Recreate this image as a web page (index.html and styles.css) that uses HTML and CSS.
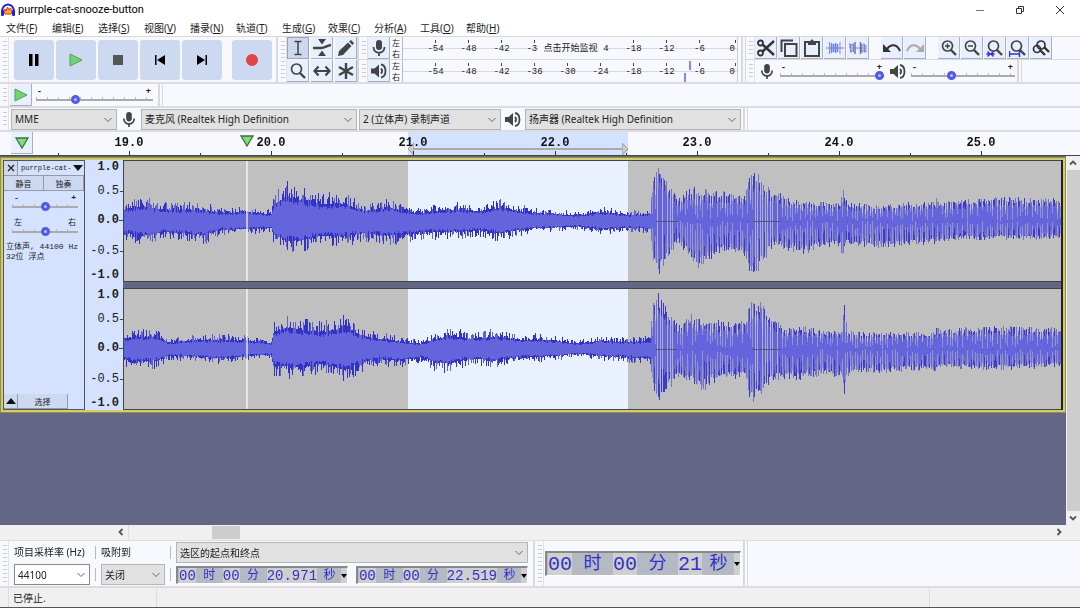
FILE: index.html
```
<!DOCTYPE html>
<html lang="zh-CN">
<head>
    <meta charset="UTF-8">
    <meta name="viewport" content="width=device-width, initial-scale=1.0">
    <title>purrple-cat-snooze-button</title>
    <link rel="stylesheet" href="styles.css">
</head>
<body>
    <svg class="sprite" aria-hidden="true">
        <symbol id="mic" viewBox="0 0 16 18">
            <rect x="5" y="1" width="6" height="10" rx="3" fill="#444"/>
            <path d="M2.5 8c0 7.500 11 7.500 11 0M8 13.500v3.500" fill="none" stroke="#444" stroke-width="1.800"/>
        </symbol>
        <symbol id="speaker" viewBox="0 0 18 16">
            <path d="M1 5.500h3.500L9 1.500v13L4.500 10.500H1z" fill="#444"/>
            <path d="M11 5.500c1.500 1.500 1.500 3.500 0 5M11 1.500c6 1 6 12 0 13" fill="none" stroke="#444" stroke-width="1.800"/>
        </symbol>
        <symbol id="play" viewBox="0 0 14 14">
            <path d="M1 1L13 7L1 13z" fill="#6ed66e" stroke="#5a9a5a"/>
        </symbol>
        <symbol id="marker" viewBox="0 0 14 12">
            <path d="M1 1H13L7 11z" fill="#7be07b" stroke="#3f6f3f" stroke-width="1.300"/>
        </symbol>
        <symbol id="chevron" viewBox="0 0 10 6">
            <path d="M1.500 1L5 4.500L8.500 1" fill="none" stroke="#666"/>
        </symbol>
        <symbol id="arrow" viewBox="0 0 8 8">
            <path d="M1 5.500L4 2.500L7 5.500" fill="none" stroke="#555" stroke-width="1.800"/>
        </symbol>
        <symbol id="lens" viewBox="0 0 18 18">
            <circle cx="7.500" cy="7" r="5" fill="none" stroke="#444" stroke-width="1.700"/>
            <path d="M11 11l5 5" stroke="#444" stroke-width="2.400"/>
        </symbol>
    </svg>

    <header class="titlebar">
        <svg class="logo" viewBox="0 0 16 14">
            <path d="M2 10C1 -1.500 15 -1.500 14 10" fill="none" stroke="#2222dd" stroke-width="2"/>
            <path d="M4 9l1-3 1 2 1.500-4 1.500 3 1.500-2L12 9l-1 2H5z" fill="#ffb020" stroke="#e03020"/>
            <rect x="1" y="7" width="3" height="6" rx="1" fill="#2222dd"/>
            <rect x="12" y="7" width="3" height="6" rx="1" fill="#2222dd"/>
        </svg>
        <h1>purrple-cat-snooze-button</h1>
        <button aria-label="最小化"><svg viewBox="0 0 10 10"><path d="M1 5.500h8" stroke="#777"/></svg></button>
        <button aria-label="还原"><svg viewBox="0 0 10 10"><path d="M1.500 3.500h5v5h-5zM3.500 3V1.500h5v5H7" fill="none" stroke="#333"/></svg></button>
        <button aria-label="关闭"><svg viewBox="0 0 10 10"><path d="M1 1l8 8M9 1l-8 8" stroke="#333"/></svg></button>
    </header>

    <nav class="menubar">
        <a href="#">文件(<u>F</u>)</a>
        <a href="#">编辑(<u>E</u>)</a>
        <a href="#">选择(<u>S</u>)</a>
        <a href="#">视图(<u>V</u>)</a>
        <a href="#">播录(<u>N</u>)</a>
        <a href="#">轨道(<u>T</u>)</a>
        <a href="#">生成(<u>G</u>)</a>
        <a href="#">效果(<u>C</u>)</a>
        <a href="#">分析(<u>A</u>)</a>
        <a href="#">工具(<u>O</u>)</a>
        <a href="#">帮助(<u>H</u>)</a>
    </nav>

    <div class="dock dock-main">
        <div class="toolbar">
            <div class="grip"></div>
            <div class="transport">
                <button aria-label="暂停"><svg viewBox="0 0 14 14"><path d="M2 1h3.500v12H2zM8 1h3.500v12H8z"/></svg></button>
                <button aria-label="播放"><svg><use href="#play"/></svg></button>
                <button aria-label="停止"><svg viewBox="0 0 14 14"><path d="M2 2h10v10H2z" fill="#555"/></svg></button>
                <button aria-label="跳至开头"><svg viewBox="0 0 14 14"><path d="M2 2h1.500v10H2zM12 2v10L4 7z"/></svg></button>
                <button aria-label="跳至结尾"><svg viewBox="0 0 14 14"><path d="M10.500 2H12v10h-1.500zM2 2v10l8-5z"/></svg></button>
                <button class="record" aria-label="录制"><svg viewBox="0 0 14 14"><circle cx="7" cy="7" r="6" fill="#e04646"/></svg></button>
            </div>
        </div>
        <div class="toolbar">
            <div class="grip"></div>
            <div class="tools">
                <button class="active" aria-label="选择工具"><svg viewBox="0 0 18 18"><path d="M5.500 2.500h2.500l1 .5 1-.5h2.500M5.500 15.500h2.500l1-.5 1 .5h2.500M9 3v12" fill="none" stroke="#444" stroke-width="1.500"/></svg></button>
                <button aria-label="包络工具"><svg viewBox="0 0 18 18"><path d="M5 0h8L9 5.500zM5 17h8L9 11.500z" fill="#444"/><path d="M0 9h8C12 9 13 7 18 6" fill="none" stroke="#444" stroke-width="2.400"/></svg></button>
                <button aria-label="绘制工具"><svg viewBox="0 0 18 18"><path d="M1 17l1-5L11 3.500l3.500 3.500L6 16zM12 2.500l2-1.500L17 4l-1.500 2z" fill="#444"/></svg></button>
                <button aria-label="缩放工具"><svg><use href="#lens"/></svg></button>
                <button aria-label="时移工具"><svg viewBox="0 0 18 18"><path d="M2 9h14M5.500 4.500L1.500 9l4 4.500M12.500 4.500l4 4.500-4 4.500" fill="none" stroke="#444" stroke-width="2.200"/></svg></button>
                <button aria-label="多功能工具"><svg viewBox="0 0 18 18"><path d="M9 1v16M2 5l14 8M16 5L2 13" stroke="#444" stroke-width="2.400"/></svg></button>
            </div>
        </div>
        <div class="toolbar meters">
            <div class="meter-row">
                <div class="grip"></div>
                <button class="tool" aria-label="录音电平"><svg><use href="#mic"/></svg></button>
                <div class="channels"><span>左</span><span>右</span></div>
                <div class="meter">
                    <span>-54</span><span>-48</span><span>-42</span><span>-36</span><span>-30</span><span>-24</span><span>-18</span><span>-12</span><span>-6</span><span>0</span>
                    <button class="monitor">点击开始监视</button>
                </div>
            </div>
            <div class="meter-row">
                <div class="grip"></div>
                <button class="tool" aria-label="播放电平"><svg><use href="#speaker"/></svg></button>
                <div class="channels"><span>左</span><span>右</span></div>
                <div class="meter">
                    <span>-54</span><span>-48</span><span>-42</span><span>-36</span><span>-30</span><span>-24</span><span>-18</span><span>-12</span><span>-6</span><span>0</span>
                    <i class="peak peak-left"></i>
                    <i class="peak peak-right"></i>
                </div>
            </div>
        </div>
        <div class="edit-mixer">
            <div class="edit-row">
                <div class="grip"></div>
                <div class="button-group">
                    <button class="tool" aria-label="剪切"><svg viewBox="0 0 18 18"><circle cx="3.500" cy="4" r="2.500" fill="none" stroke="#333" stroke-width="1.800"/><circle cx="3.500" cy="14" r="2.500" fill="none" stroke="#333" stroke-width="1.800"/><path d="M5.500 5.500L17 16M5.500 12.500L17 2" stroke="#333" stroke-width="2.400"/></svg></button>
                    <button class="tool" aria-label="复制"><svg viewBox="0 0 18 18"><path d="M1.500 13V1.500H13M5 5h11.500v12H5z" fill="none" stroke="#444" stroke-width="2"/></svg></button>
                    <button class="tool" aria-label="粘贴"><svg viewBox="0 0 18 18"><path d="M2 3h14v14H2z" fill="none" stroke="#444" stroke-width="2"/><path d="M5 2h2.500c0-2 3-2 3 0H13v4H5z" fill="#444"/></svg></button>
                    <button class="tool" aria-label="修剪音频"><svg viewBox="0 0 18 18"><path d="M0 9h18" stroke="#6f7fe8"/><path d="M5.500 4v10M7.500 5v8M9.500 4v10M11.500 5v8" stroke="#6f7fe8" stroke-width="1.500"/><path d="M3.500 3v12M14 3v12" stroke="#8090b0"/></svg></button>
                    <button class="tool" aria-label="静音音频"><svg viewBox="0 0 18 18"><path d="M0 9V5h1.500v8H3V5h1.500v8M12.500 5v8H14V5h1.500v8H17V6" fill="none" stroke="#6f7fe8"/><path d="M6 9h6" stroke="#6f7fe8"/><path d="M6 3v12M11.500 3v12" stroke="#777" stroke-width="1.500"/></svg></button>
                </div>
                <div class="button-group">
                    <button class="tool" aria-label="撤销"><svg viewBox="0 0 18 18"><path d="M4 10C8 4.500 14 5 17 12" fill="none" stroke="#333" stroke-width="2"/><path d="M0 5v8h8z" fill="#333"/></svg></button>
                    <button class="tool" aria-label="重做"><svg viewBox="0 0 18 18"><path d="M14 10C10 4.500 4 5 1 12" fill="none" stroke="#aaa" stroke-width="2"/><path d="M18 5v8h-8z" fill="#aaa"/></svg></button>
                </div>
                <div class="button-group">
                    <button class="tool" aria-label="放大"><svg viewBox="0 0 18 18"><use href="#lens"/><path d="M5 7h5M7.500 4.500v5" stroke="#444" stroke-width="1.500"/></svg></button>
                    <button class="tool" aria-label="缩小"><svg viewBox="0 0 18 18"><use href="#lens"/><path d="M5 7h5" stroke="#444" stroke-width="1.500"/></svg></button>
                    <button class="tool" aria-label="适应选区"><svg viewBox="0 0 18 18"><use href="#lens"/><path d="M0 15h9M7 12.500L4.500 15 7 17.500zM2 12.500L4.500 15 2 17.500z" fill="#3333dd" stroke="#3333dd"/></svg></button>
                    <button class="tool" aria-label="适应项目"><svg viewBox="0 0 18 18"><use href="#lens"/><path d="M.5 12v6M10.500 12v6M1 15h9" stroke="#3333dd" stroke-width="1.500"/></svg></button>
                    <button class="tool" aria-label="缩放切换"><svg viewBox="0 0 18 18"><circle cx="9" cy="6" r="4" fill="none" stroke="#333" stroke-width="1.700"/><circle cx="5" cy="10" r="3.500" fill="none" stroke="#333" stroke-width="1.700"/><path d="M12 8l5 5M8 11l5 5" stroke="#333" stroke-width="2.400"/></svg></button>
                </div>
            </div>
            <div class="mixer-row">
                <div class="toolbar">
                    <div class="grip"></div>
                    <svg class="device-icon"><use href="#mic"/></svg>
                    <div class="slider">
                        <div class="ends"><span>-</span><span>+</span></div>
                        <input type="range" min="0" max="100" value="100" aria-label="录音音量">
                    </div>
                    <svg class="device-icon"><use href="#speaker"/></svg>
                    <div class="slider">
                        <div class="ends"><span>-</span><span>+</span></div>
                        <input type="range" min="0" max="100" value="38" aria-label="播放音量">
                    </div>
                </div>
                <div class="dock-end"></div>
            </div>
        </div>
    </div>

    <div class="dock">
        <div class="toolbar speed">
            <div class="grip"></div>
            <button class="tool" aria-label="以指定速度播放"><svg><use href="#play"/></svg></button>
            <div class="slider">
                <div class="ends"><span>-</span><span>+</span></div>
                <input type="range" min="0" max="100" value="32" aria-label="播放速度">
            </div>
        </div>
        <div class="dock-end"></div>
    </div>

    <div class="dock">
        <div class="toolbar devices">
            <div class="grip"></div>
            <div class="combo host">
                <select aria-label="音频主机"><option>MME</option></select>
                <svg><use href="#chevron"/></svg>
            </div>
            <svg class="device-icon"><use href="#mic"/></svg>
            <div class="combo input-device">
                <select aria-label="录制设备"><option>麦克风 (Realtek High Definition</option></select>
                <svg><use href="#chevron"/></svg>
            </div>
            <div class="combo input-channels">
                <select aria-label="录制声道"><option>2 (立体声) 录制声道</option></select>
                <svg><use href="#chevron"/></svg>
            </div>
            <svg class="device-icon"><use href="#speaker"/></svg>
            <div class="combo output-device">
                <select aria-label="播放设备"><option>扬声器 (Realtek High Definition</option></select>
                <svg><use href="#chevron"/></svg>
            </div>
        </div>
        <div class="dock-end"></div>
    </div>

    <div class="timeline">
        <div class="selection-range">
            <svg viewBox="0 0 6 12"><path d="M6 0v12L0 6z" fill="#ccc" stroke="#999"/></svg>
            <svg viewBox="0 0 6 12"><path d="M0 0v12l6-6z" fill="#ccc" stroke="#999"/></svg>
        </div>
        <button class="tool pin" aria-label="固定播放头"><svg><use href="#marker"/></svg></button>
        <div class="scale">
            <span>19.0</span><span>20.0</span><span>21.0</span><span>22.0</span><span>23.0</span><span>24.0</span><span>25.0</span>
        </div>
        <svg class="playhead"><use href="#marker"/></svg>
    </div>

    <main class="workspace">
        <div class="tracks">
            <section class="track">
                <aside class="track-panel">
                    <div class="track-title">
                        <button aria-label="关闭轨道"><svg viewBox="0 0 8 8"><path d="M1 1l6 6M7 1L1 7" stroke="#222" stroke-width="1.300"/></svg></button>
                        <button class="track-name"><span>purrple-cat-</span><svg viewBox="0 0 10 6"><path d="M0 0h10L5 6z" fill="#111"/></svg></button>
                    </div>
                    <div class="track-mutes">
                        <button>静音</button>
                        <button>独奏</button>
                    </div>
                    <div class="slider">
                        <div class="ends"><span>-</span><span>+</span></div>
                        <input type="range" min="0" max="100" value="50" aria-label="增益">
                    </div>
                    <div class="slider pan">
                        <div class="ends"><span>左</span><span>右</span></div>
                        <input type="range" min="0" max="100" value="50" aria-label="声像">
                    </div>
                    <p>立体声, 44100 Hz<br>32位 浮点</p>
                    <div class="track-foot">
                        <button aria-label="折叠"><svg viewBox="0 0 10 6"><path d="M0 6h10L5 0z" fill="#111"/></svg></button>
                        <button class="track-select">选择</button>
                    </div>
                </aside>
                <div class="channel-list">
                    <div class="channel">
                        <div class="amplitude"><b>1.0</b><span>0.5</span><b>0.0</b><span>-0.5</span><b>-1.0</b></div>
                        <div class="wave"><canvas id="wave-left"></canvas></div>
                    </div>
                    <div class="channel">
                        <div class="amplitude"><b>1.0</b><span>0.5</span><b>0.0</b><span>-0.5</span><b>-1.0</b></div>
                        <div class="wave"><canvas id="wave-right"></canvas></div>
                    </div>
                </div>
            </section>
        </div>
        <div class="vscroll">
            <button aria-label="向上"><svg><use href="#arrow"/></svg></button>
            <div class="thumb"></div>
            <button class="down" aria-label="向下"><svg><use href="#arrow"/></svg></button>
        </div>
    </main>
    <div class="hscroll">
        <button class="left" aria-label="向左"><svg><use href="#arrow"/></svg></button>
        <div class="rail"><div class="thumb"></div></div>
        <button class="right" aria-label="向右"><svg><use href="#arrow"/></svg></button>
    </div>

    <div class="dock dock-bottom">
        <div class="toolbar">
            <div class="grip"></div>
            <div class="field rate">
                <label for="rate">项目采样率 (Hz)</label>
                <div class="combo white">
                    <select id="rate"><option>44100</option></select>
                    <svg><use href="#chevron"/></svg>
                </div>
            </div>
            <div class="field snap">
                <label for="snap">吸附到</label>
                <div class="combo">
                    <select id="snap"><option>关闭</option></select>
                    <svg><use href="#chevron"/></svg>
                </div>
            </div>
            <div class="field range">
                <div class="combo">
                    <select aria-label="选区显示"><option>选区的起点和终点</option></select>
                    <svg><use href="#chevron"/></svg>
                </div>
                <div class="times">
                    <div class="time"><b>00</b><i>时</i><b>00</b><i>分</i><b>20.971</b><i>秒</i><button aria-label="格式"><svg viewBox="0 0 6 4"><path d="M0 0h6L3 4z"/></svg></button></div>
                    <div class="time"><b>00</b><i>时</i><b>00</b><i>分</i><b>22.519</b><i>秒</i><button aria-label="格式"><svg viewBox="0 0 6 4"><path d="M0 0h6L3 4z"/></svg></button></div>
                </div>
            </div>
        </div>
        <div class="toolbar position">
            <div class="grip"></div>
            <div class="time big"><b>00</b><i>时</i><b>00</b><i>分</i><b>21</b><i>秒</i><button aria-label="格式"><svg viewBox="0 0 6 4"><path d="M0 0h6L3 4z"/></svg></button></div>
        </div>
        <div class="dock-end"></div>
    </div>

    <footer class="statusbar">
        <span class="state">已停止.</span>
        <span class="message"></span>
        <span class="actual-rate"></span>
    </footer>
    <script src="wave.js"></script>
</body>
</html>
```
FILE: styles.css
```
* {
    box-sizing: border-box;
}
body {
    margin: 0;
    height: 100vh;
    display: flex;
    flex-direction: column;
    overflow: hidden;
    background-color: #f8f9ff;
    border-bottom: 1px solid #555;
    color: #222;
    font-family: "Noto Sans", "Noto Sans CJK SC", sans-serif;
    font-size: 10px;
}
button {
    display: flex;
    align-items: center;
    justify-content: center;
    padding: 0;
    border: none;
    background: none;
    color: inherit;
    font: inherit;
}
svg {
    display: block;
    flex: none;
}
.sprite {
    position: absolute;
    width: 0;
    height: 0;
}

/* title and menu */
.titlebar {
    display: flex;
    align-items: center;
    height: 19px;
    flex: none;
    background-color: #fff;
}
.logo {
    width: 16px;
    height: 14px;
    margin-right: 2px;
}
.titlebar h1 {
    flex: 1;
    margin: 0;
    font-family: Roboto, "Noto Sans", sans-serif;
    font-size: 11px;
    font-weight: normal;
    color: #000;
}
.titlebar button {
    width: 40px;
    height: 19px;
}
.titlebar button svg {
    width: 10px;
    height: 10px;
}
.menubar {
    display: flex;
    gap: 12px;
    height: 18px;
    flex: none;
    padding-left: 6px;
    line-height: 18px;
    background-color: #fff;
    border-bottom: 1px solid #d9d9d9;
}
.menubar a {
    width: 34px;
    color: #222;
    text-decoration: none;
    white-space: nowrap;
}

/* toolbars */
.dock {
    display: flex;
    height: 24px;
    flex: none;
    border-bottom: 2px solid #dcdce0;
}
.dock-main {
    height: 47px;
}
.toolbar {
    display: flex;
    align-items: center;
    border-right: 2px solid #d9d9dc;
}
.dock-end {
    width: 3px;
    border-right: 1px solid #d9d9dc;
}
.grip {
    width: 9px;
    align-self: stretch;
    flex: none;
    border-right: 1px solid #e2e2e6;
    background: repeating-linear-gradient(#ccccd0 0 1px, transparent 1px 4px) 3px 4px / 4px calc(100% - 8px) no-repeat;
}
.transport {
    display: flex;
    gap: 2px;
    padding: 0 4px 0 5px;
}
.transport button {
    width: 40px;
    height: 40px;
    border-radius: 3px;
    background-color: #ccd9f0;
}
.transport .record {
    margin-left: 8px;
}
.transport svg {
    width: 14px;
    height: 14px;
}
.tools {
    display: grid;
    grid-template-columns: repeat(3, 22px);
    grid-auto-rows: 22px;
    gap: 1px 2px;
}
.tool, .tools button {
    width: 22px;
    height: 22px;
    flex: none;
    background-color: #e8effd;
    border-right: 1px solid #a8b0c0;
    border-bottom: 1px solid #a8b0c0;
}
.tools .active {
    background-color: #ccd9f0;
    border: 1px solid #9aa2b5;
}
.tool svg, .tools svg {
    width: 18px;
    height: 18px;
}
.meters {
    flex-direction: column;
    padding-right: 3px;
}
.meter-row {
    display: flex;
    flex: 1;
    height: 22px;
}
.meter-row + .meter-row {
    border-top: 1px solid #d9d9dc;
}
.channels {
    display: flex;
    flex-direction: column;
    width: 12px;
    padding-left: 2px;
    font-size: 8px;
    line-height: 11px;
}
.meter {
    position: relative;
    display: grid;
    grid-template-columns: repeat(9, 33px) 22px;
    width: 336px;
    padding-left: 16px;
    border-left: 1px solid #bbb;
    border-right: 1px solid #ccc;
    background: linear-gradient(#d9d9dc, #d9d9dc) 0 11px / 100% 1px no-repeat;
    font-family: "Liberation Mono", monospace;
    font-size: 9px;
    line-height: 24px;
    text-align: center;
}
.meter span {
    height: 22px;
    background: linear-gradient(#444, #444) center 3px / 1px 3px no-repeat;
}
.meter span:nth-child(10) {
    text-align: right;
    padding-right: 3px;
    background-position: right 2px top 3px;
}
.monitor {
    position: absolute;
    left: 135px;
    top: 3px;
    width: 65px;
    height: 16px;
    background-color: #f8f9ff;
    font: 9px/16px "Noto Sans CJK SC", sans-serif;
}
.peak {
    position: absolute;
    width: 2px;
    height: 9px;
    background-color: #8484ff;
}
.peak-left {
    top: 1px;
    left: 286px;
}
.peak-right {
    bottom: 0;
    left: 281px;
}
.edit-mixer {
    display: flex;
    flex-direction: column;
    flex: 1;
    margin-left: 2px;
}
.edit-row, .mixer-row {
    display: flex;
    height: 22px;
    flex: 1;
    border-left: 1px solid #d9d9dc;
}
.edit-row {
    gap: 12px;
    border-bottom: 1px solid #d9d9dc;
}
.edit-row .grip {
    margin-right: -12px;
}
.button-group {
    display: flex;
    gap: 1px;
}
.device-icon {
    width: 18px;
    height: 17px;
    margin: 0 3px;
}
.slider {
    width: 104px;
}
.slider .ends {
    display: flex;
    justify-content: space-between;
    padding: 0 2px;
    font-weight: bold;
    font-size: 9px;
    line-height: 8px;
}
.slider input {
    display: block;
    width: 100%;
    height: 9px;
    margin: 0;
    appearance: none;
    background:
        linear-gradient(#aaa, #aaa) 0 4px / 100% 2px no-repeat,
        repeating-linear-gradient(90deg, #bbb 0 1px, transparent 1px 11px) 0 2px / 100% 3px no-repeat;
}
.slider input::-webkit-slider-thumb {
    appearance: none;
    width: 9px;
    height: 9px;
    border: 3px solid #5059e8;
    border-radius: 50%;
    background-color: #b4c0ff;
}
.mixer-row .slider {
    margin: 0 2px 0 1px;
}
.speed .slider {
    width: 117px;
    margin: 0 5px 0 4px;
}
.speed .tool {
    margin-left: 1px;
}
.speed .tool svg {
    width: 14px;
    height: 14px;
}

/* drop-downs */
.combo {
    position: relative;
    height: 21px;
}
.combo select {
    width: 100%;
    height: 100%;
    padding: 0 16px 0 3px;
    appearance: none;
    border: 1px solid #b4b4b4;
    border-radius: 0;
    background-color: #e1e1e1;
    color: #222;
    font: inherit;
}
.combo.white select {
    background-color: #fff;
    border-color: #888;
}
.combo svg {
    position: absolute;
    right: 4px;
    top: 8px;
    width: 10px;
    height: 6px;
    pointer-events: none;
}
.devices {
    padding-right: 2px;
}
.host {
    width: 106px;
    margin-left: 2px;
}
.input-device {
    width: 216px;
}
.input-channels {
    width: 142px;
    margin-left: 2px;
}
.output-device {
    width: 216px;
}

/* timeline */
.timeline {
    position: relative;
    display: flex;
    height: 24px;
    flex: none;
    border-bottom: 1px solid #444;
}
.pin {
    margin-left: 11px;
}
.pin svg, .playhead {
    width: 14px;
    height: 12px;
}
.scale {
    position: relative;
    display: grid;
    grid-template-columns: repeat(7, 142px);
    flex: 1;
    margin-left: 25px;
    overflow: hidden;
    font-family: "Liberation Mono", monospace;
    font-size: 12px;
    font-weight: bold;
    line-height: 22px;
    text-align: center;
    color: #111;
}
.scale span {
    background:
        linear-gradient(#333, #333) center bottom / 1px 4px no-repeat,
        linear-gradient(#333, #333) left bottom / 1px 2px no-repeat;
}
.selection-range {
    position: absolute;
    left: 408px;
    top: 0;
    display: flex;
    align-items: flex-end;
    justify-content: space-between;
    width: 220px;
    height: 100%;
    background: linear-gradient(#aaa, #aaa) 0 16px / 100% 2px no-repeat #d4e2ff;
}
.selection-range svg {
    width: 6px;
    height: 12px;
}
.playhead {
    position: absolute;
    left: 240px;
    top: 3px;
}

/* tracks */
.workspace {
    display: flex;
    flex: 1;
    min-height: 0;
    background-color: #636785;
}
.tracks {
    flex: 1;
    min-width: 0;
    padding: 2px 1px 0;
}
.track {
    display: flex;
    height: 254px;
    border: 2px solid #d2cf6a;
    outline: 1px solid #8f8d55;
}
.track-panel {
    display: flex;
    flex-direction: column;
    width: 82px;
    flex: none;
    border: 1px solid #555;
    background-color: #d4e2ff;
    font-family: "Liberation Mono", "Noto Sans CJK SC", monospace;
    font-size: 8px;
}
.track-panel button {
    background-color: #ccd9f0;
    border-right: 1px solid #99a;
    border-bottom: 1px solid #99a;
}
.track-title, .track-mutes, .track-foot {
    display: flex;
    height: 15px;
}
.track-title button, .track-foot button {
    width: 14px;
}
.track-title svg {
    width: 8px;
    height: 8px;
}
.track-panel .track-name {
    flex: 1;
    justify-content: space-between;
    padding: 0 1px 0 3px;
    border-right: none;
    background-color: #d4e2ff;
    font-size: 7px;
    white-space: nowrap;
}
.track-name svg, .track-foot svg {
    width: 10px;
    height: 6px;
}
.track-mutes button {
    flex: 1;
}
.track-panel .slider {
    width: 66px;
    margin: 3px 8px 0;
}
.track-panel .ends {
    font-size: 8px;
}
.track-panel .pan {
    margin-top: 8px;
}
.track-panel .pan .ends {
    font-weight: normal;
}
.track-panel p {
    margin: 6px 0 0 2px;
    line-height: 10px;
    white-space: nowrap;
}
.track-foot {
    margin-top: auto;
}
.track-foot .track-select {
    width: 50px;
}
.channel-list {
    display: flex;
    flex-direction: column;
    justify-content: space-between;
    flex: 1;
    min-width: 0;
    border-right: 2px solid #222;
    background: linear-gradient(#d4e2ff, #d4e2ff) 0 0 / 38px 100% no-repeat;
}
.channel {
    display: flex;
    height: 122px;
}
.amplitude {
    display: grid;
    grid-template-rows: 14px 33px 26px 35px 13px;
    align-items: center;
    width: 38px;
    flex: none;
    padding-right: 4px;
    background: linear-gradient(#444, #444) right 60px / 4px 1px no-repeat,
        linear-gradient(#444, #444) right 31px / 3px 1px no-repeat,
        linear-gradient(#444, #444) right 91px / 3px 1px no-repeat;
    font-family: "Liberation Mono", monospace;
    font-size: 12px;
    line-height: 12px;
    text-align: right;
}
.wave {
    flex: 1;
    min-width: 0;
    border: 1px solid #444;
    border-right: none;
    background-color: #c0c0c0;
}
.wave canvas {
    display: block;
    width: 100%;
    height: 120px;
}

/* scrollbars */
.vscroll, .hscroll {
    display: flex;
    flex: none;
    background-color: #f0f0f0;
}
.vscroll {
    flex-direction: column;
    width: 14px;
}
.vscroll button, .hscroll button {
    width: 14px;
    height: 14px;
}
.vscroll .thumb {
    flex: 1;
    margin-left: 1px;
}
.thumb {
    background-color: #cdcdcd;
}
.vscroll svg, .hscroll svg {
    width: 8px;
    height: 8px;
}
.hscroll {
    height: 15px;
    padding: 0 14px 0 114px;
}
.hscroll .rail {
    flex: 1;
    padding-left: 83px;
    border-left: 1px solid #ddd;
}
.hscroll .thumb {
    width: 28px;
    height: 13px;
    margin-top: 1px;
}
.down svg {
    transform: rotate(180deg);
}
.left svg {
    transform: rotate(-90deg);
}
.right svg {
    transform: rotate(90deg);
}

/* selection bar */
.dock-bottom {
    height: 48px;
    border-top: 1px solid #dcdce0;
}
.field {
    display: flex;
    flex-direction: column;
    justify-content: space-between;
    height: 43px;
    margin-left: 5px;
}
.field + .field {
    padding-left: 6px;
    background: linear-gradient(#bbb, #bbb) 0 4px / 1px 13px no-repeat,
        linear-gradient(#bbb, #bbb) 0 26px / 1px 13px no-repeat;
}
.field label {
    line-height: 20px;
    white-space: nowrap;
}
.rate {
    width: 76px;
}
.snap {
    width: 70px;
}
.range {
    width: 358px;
    margin-right: 5px;
}
.times {
    display: flex;
    justify-content: space-between;
    height: 20px;
    padding-top: 1px;
}
.time {
    display: flex;
    height: 18px;
    padding-left: 1px;
    border: 1px solid #fff;
    border-top: 2px solid #888;
    border-left: 2px solid #888;
    background-color: #b4b9c4;
    color: #3232c8;
    font-family: "Liberation Mono", "Noto Sans CJK SC", monospace;
    font-size: 14px;
    line-height: 16px;
}
.time b, .time i {
    flex: none;
    font-weight: normal;
    font-style: normal;
}
.time b {
    background-color: #cfcfcf;
}
.time i {
    width: 27px;
    font-size: 12px;
    text-align: center;
}
.time i:last-of-type {
    width: 25px;
}
.time button {
    width: 6px;
    margin-left: -1px;
    background-color: #cfcfcf;
}
.time svg {
    width: 6px;
    height: 4px;
}
.position {
    padding-right: 2px;
}
.time.big {
    height: 25px;
    margin-left: 1px;
    font-size: 20px;
    line-height: 23px;
}
.time.big i {
    width: 41px;
    font-size: 18px;
}
.time.big i:last-of-type {
    width: 33px;
}
.statusbar {
    display: flex;
    height: 19px;
    flex: none;
    padding-left: 8px;
    background-color: #f0f0f0;
    line-height: 20px;
}
.state {
    width: 149px;
    padding-left: 4px;
    border-left: 1px solid #ddd;
    border-right: 1px solid #ddd;
}
.message {
    flex: 1;
}
.actual-rate {
    width: 151px;
    border-left: 1px solid #ddd;
}
```
FILE: wave.js
```
// [x, peak above zero, peak below zero], x on a 937 wide view
const left = [
    [0, 17, 16], [18, 22, 22], [40, 17, 16], [80, 16, 21], [100, 12, 12], [125, 13, 12],
    [147, 10, 10], [149, 22, 20], [160, 36, 28], [175, 32, 30], [195, 25, 22], [220, 26, 23],
    [241, 14, 18], [266, 20, 22], [283, 13, 19], [296, 12, 17], [326, 17, 16], [356, 15, 14],
    [376, 20, 18], [406, 12, 11], [436, 10, 9], [456, 8, 8], [476, 13, 12], [506, 9, 10],
    [526, 10, 12], [528, 42, 34], [534, 53, 52], [544, 36, 34], [554, 22, 20], [566, 34, 38],
    [576, 30, 46], [596, 28, 30], [621, 26, 34], [624, 42, 46], [630, 49, 54], [641, 35, 36],
    [651, 28, 22], [666, 22, 30], [681, 20, 32], [696, 18, 25], [716, 16, 25], [718, 37, 38],
    [721, 20, 24], [726, 17, 23], [756, 15, 25], [786, 18, 23], [811, 18, 22], [813, 26, 20],
    [815, 18, 20], [836, 20, 18], [876, 23, 18], [937, 21, 17]
];
const right = [
    [0, 16, 15], [10, 18, 19], [33, 18, 17], [45, 9, 10], [70, 13, 11], [100, 13, 14],
    [125, 12, 10], [147, 8, 8], [149, 24, 24], [161, 31, 25], [176, 29, 28], [196, 25, 22],
    [221, 31, 30], [241, 18, 18], [256, 15, 15], [276, 11, 17], [296, 8, 12], [311, 15, 20],
    [326, 20, 21], [346, 15, 14], [371, 18, 17], [396, 14, 12], [426, 13, 11], [451, 8, 7],
    [476, 12, 10], [506, 10, 12], [526, 12, 14], [528, 44, 34], [534, 53, 53], [544, 36, 38],
    [554, 22, 30], [566, 34, 29], [576, 28, 41], [596, 27, 29], [621, 26, 28], [624, 42, 46],
    [630, 49, 52], [641, 40, 36], [651, 28, 30], [661, 20, 28], [676, 22, 29], [696, 18, 25],
    [717, 16, 27], [720, 45, 44], [723, 18, 26], [731, 16, 22], [756, 16, 23], [786, 16, 21],
    [811, 16, 21], [813, 27, 21], [815, 18, 18], [836, 20, 19], [876, 22, 20], [937, 20, 17]
];
const VIEW = 937;

function envelope(points, x) {
    let i = 1;
    while (i < points.length - 1 && points[i][0] < x) i++;
    const a = points[i - 1];
    const b = points[i];
    const t = Math.min(1, (x - a[0]) / (b[0] - a[0]));
    return [a[1] + (b[1] - a[1]) * t, a[2] + (b[2] - a[2]) * t];
}

function draw(id, points, seed) {
    const canvas = document.getElementById(id);
    const w = canvas.width = canvas.parentElement.clientWidth;
    const h = canvas.height = 120;
    const ctx = canvas.getContext('2d');
    const mid = 60;
    const rand = () => {
        seed = (seed * 16807) % 2147483647;
        return seed / 2147483647;
    };

    ctx.fillStyle = '#c0c0c0';
    ctx.fillRect(0, 0, w, h);
    ctx.fillStyle = '#e9f1ff';
    ctx.fillRect(Math.round(284 * w / VIEW), 0, Math.round(220 * w / VIEW), h);

    const bar = (x, top, bottom, color) => {
        ctx.fillStyle = color;
        ctx.fillRect(x, mid - Math.round(top), 1, Math.round(top) + Math.round(bottom));
    };

    for (let px = 0; px < w; px++) {
        const x = px * VIEW / w;
        const [up, down] = envelope(points, x);
        if (x < 527) {
            // dense part: dark peaks round a lighter body
            const top = up * (0.66 + 0.5 * Math.pow(rand(), 2));
            const bottom = down * (0.66 + 0.5 * Math.pow(rand(), 2));
            bar(px, top, bottom, rand() < 0.3 ? '#6262cc' : '#3232c8');
            bar(px, up * (0.48 + 0.12 * rand()), down * (0.48 + 0.16 * rand()), '#6464dc');
            continue;
        }
        // decaying notes: comb of single cycles, open to the zero line after each attack
        const open = (x > 531 && x < 553) || (x > 628 && x < 656);
        const sharp = (x < 535) || (x > 623 && x < 632) || (x > 716 && x < 722);
        const beat = px % 5;
        const gap = beat === 3 || (beat === 1 && rand() < 0.5);
        const top = up * (sharp ? 0.9 + 0.15 * rand() : 0.78 + 0.3 * rand());
        const bottom = down * (sharp ? 0.85 + 0.2 * rand() : 0.78 + 0.3 * rand());
        if (gap) {
            bar(px, top * (0.5 + 0.4 * rand()), bottom * 0.9, open ? '#aeaec6' : '#9494ca');
            if (!open) bar(px, up * 0.5 * rand(), down * 0.35 * rand(), '#6464dc');
        } else {
            const dark = beat === 0 || rand() < 0.25;
            bar(px, top, bottom, dark ? '#3c3cc8' : '#7474c6');
            bar(px, up * (0.6 + 0.15 * rand()), down * (0.3 + 0.5 * rand()), '#6464dc');
        }
        if (open || (beat === 3 && rand() < 0.4)) bar(px, 0, 1, '#55557a');
    }

    ctx.fillStyle = 'rgba(255, 255, 255, 0.6)';
    ctx.fillRect(Math.round(122 * w / VIEW), 0, 2, h);
}

function drawAll() {
    draw('wave-left', left, 4711);
    draw('wave-right', right, 1234);
}

drawAll();
window.addEventListener('resize', drawAll);
```
